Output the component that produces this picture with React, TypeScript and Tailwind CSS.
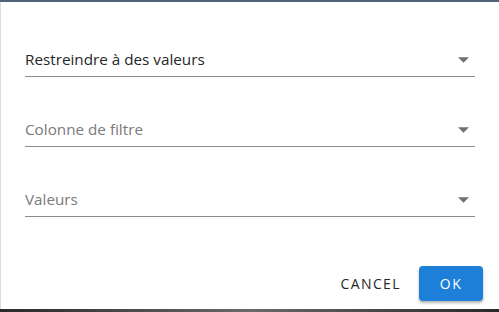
import React from "react";

function Field({ label, filled }: { label: string; filled?: boolean }) {
  return (
    <div className="flex h-[33px] items-center border-b border-[#8c8c8c] pb-[1px] pr-[6px]">
      <span
        className={
          "flex-1 text-[15.25px] " +
          (filled ? "text-[#262626]" : "text-[#7a7a7a]")
        }
      >
        {label}
      </span>
      <svg width="11" height="6" viewBox="0 0 10 5" className="mt-[1px]">
        <path d="M0 0 L10 0 L5 5 Z" fill="#707070" />
      </svg>
    </div>
  );
}

export default function App() {
  return (
    <div
      className="flex h-[312px] w-[499px] flex-col bg-[#3a3a3a]"
      style={{ fontFamily: "'Open Sans', sans-serif" }}
    >
      <div className="h-[2px] bg-[#4f6478]" />
      <div className="flex h-[307px] flex-col border-l border-[#dcdcdc] bg-white">
        <div className="flex flex-col gap-[37px] px-[24px] pt-[42px]">
          <Field label="Restreindre à des valeurs" filled />
          <Field label="Colonne de filtre" />
          <Field label="Valeurs" />
        </div>
        <div className="mt-[49px] flex items-center justify-end gap-[18px] pr-[16px]">
          <button className="pb-[1px] text-[14px] tracking-[1.4px] text-[#262626]">CANCEL</button>
          <button className="h-[35px] w-[64px] rounded-[4px] bg-[#1d7fd8] pb-[1px] text-[14px] tracking-[1.4px] text-white shadow-[0_2px_3px_rgba(0,0,0,0.3)]">
            OK
          </button>
        </div>
      </div>
      <div className="flex-1 bg-gradient-to-r from-[#2a2a2a] via-[#6a6a6a] to-[#2a2a2a]" />
    </div>
  );
}
